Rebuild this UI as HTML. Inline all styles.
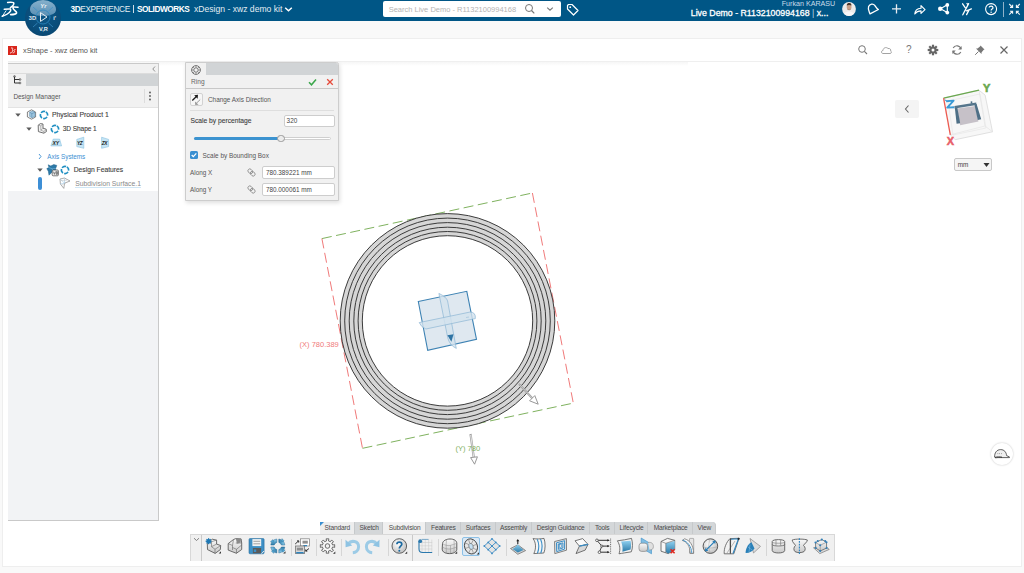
<!DOCTYPE html>
<html><head><meta charset="utf-8">
<style>
*{margin:0;padding:0;box-sizing:border-box}
html,body{width:1024px;height:573px;overflow:hidden;background:#f9f9f9;font-family:"Liberation Sans",sans-serif;position:relative}
.a{position:absolute}
.t{position:absolute;white-space:nowrap;line-height:1}
svg{position:absolute;overflow:visible}
</style></head><body>
<div class="a" style="left:0;top:0;width:1024px;height:21px;background:#005686"></div>
<div class="a" style="left:2px;top:38px;width:1020px;height:529px;background:#fff;border:1px solid #eeeeee"></div>
<svg style="left:0px;top:0px" width="22" height="20" viewBox="0 0 22 20">
 <g fill="none" stroke="#fff" stroke-linecap="round" stroke-linejoin="round">
  <path d="M7.6 2.5 C9.5 2.2 12 2.1 13.6 2.6 C14.2 3.6 13.4 5.6 10.4 7.6" stroke-width="1.5"/>
  <path d="M4.3 9.3 C6.5 9 8.8 8.9 10.6 9 C11.6 11 9 13.8 2.3 16.3" stroke-width="1.5"/>
  <path d="M2.3 16.3 L6 10.8" stroke-width="0.9"/>
  <path d="M12.8 7 C14.6 6.9 16.4 7 18 7.3" stroke-width="1.4"/>
  <path d="M13.2 7.3 C12.2 9.4 16.2 10.8 16.6 12.5 C17 14 13.5 14.6 10.6 14.6" stroke-width="1.6"/>
 </g>
</svg>
<div class="a" style="left:24.5px;top:0px;width:36px;height:36px;border-radius:50%;background:radial-gradient(circle at 50% 40%,#0d5888 0,#0a4d7a 60%,#073f66 100%)"></div>
<div class="a" style="left:29.5px;top:0px;width:26px;height:15.5px;border-radius:50% 50% 45% 45%/60% 60% 40% 40%;background:linear-gradient(#86b1cc,#5a8fb4)"></div>
<svg style="left:24.5px;top:0px" width="36" height="36" viewBox="0 0 36 36">
 <circle cx="18" cy="17" r="7" fill="none" stroke="#2c88c2" stroke-width="0.8"/>
 <g stroke="#3b90c8" stroke-width="0.7">
  <line x1="8" y1="7" x2="12.5" y2="11"/><line x1="28" y1="7" x2="23.5" y2="11"/>
  <line x1="8" y1="27" x2="12.5" y2="23"/><line x1="28" y1="27" x2="23.5" y2="23"/>
 </g>
 <path d="M15.5 12.6 L22 17 L15.5 21.4 Z" fill="none" stroke="#e8eef3" stroke-width="1"/>
 <text x="3.8" y="19.6" font-size="5.6" font-weight="bold" fill="#e8eef3" font-family="Liberation Sans">3D</text>
 <text x="15.3" y="7.6" font-size="5.8" font-weight="bold" font-style="italic" fill="#f0f4f7" font-family="Liberation Sans">Yr</text>
 <text x="28.3" y="19.6" font-size="5.6" font-weight="bold" fill="#e8eef3" font-family="Liberation Sans">i'</text>
 <text x="14" y="30.8" font-size="5.6" font-weight="bold" fill="#e8eef3" font-family="Liberation Sans">V,R</text>
</svg>
<div class="t" style="left:70.5px;top:4.9px;font-size:8.3px;color:#e3edf3;letter-spacing:-0.4px"><b style="color:#fff">3D</b>EXPERIENCE</div>
<div class="a" style="left:133px;top:5px;width:1px;height:8px;background:#cfdce6"></div>
<div class="t" style="left:137px;top:4.9px;font-size:8.3px;color:#fff;font-weight:bold;letter-spacing:-0.49px">SOLIDWORKS</div>
<div class="t" style="left:194px;top:4.6px;font-size:8.6px;color:#e3edf3">xDesign - xwz demo kit</div>
<svg style="left:284px;top:6px" width="9" height="7" viewBox="0 0 9 7"><path d="M1.2 1.8 L4.5 4.8 L7.8 1.8" fill="none" stroke="#fff" stroke-width="1.5"/></svg>
<div class="a" style="left:383px;top:1px;width:178px;height:16px;background:#fff;border-radius:2px"></div>
<div class="t" style="left:388.7px;top:6.12px;font-size:7.5px;color:#b4b4b4;">Search Live Demo - R1132100994168</div>
<svg style="left:524px;top:3px" width="12" height="12" viewBox="0 0 12 12"><circle cx="5" cy="5" r="3.5" fill="none" stroke="#777" stroke-width="1"/><line x1="7.5" y1="7.5" x2="10.3" y2="10.3" stroke="#777" stroke-width="1.2"/></svg>
<svg style="left:546px;top:6px" width="8" height="6" viewBox="0 0 8 6"><path d="M1.2 1.6 L4 4.2 L6.8 1.6" fill="none" stroke="#777" stroke-width="1.1"/></svg>
<svg style="left:566px;top:3px" width="13" height="13" viewBox="0 0 13 13"><path d="M1.5 2.5 L1.5 6 L7.5 12 L12 7.5 L6 1.5 L2.5 1.5 Z" fill="none" stroke="#fff" stroke-width="1.2" stroke-linejoin="round"/><circle cx="4.2" cy="4.2" r="0.9" fill="#fff"/></svg>
<div class="t" style="left:781.7px;top:1.00px;font-size:7.15px;color:#c9dceb;">Furkan KARASU</div>
<div class="t" style="left:690.8px;top:8.70px;font-size:8.78px;color:#fff;-webkit-text-stroke:0.3px #fff;">Live Demo - R1132100994168 <span style="color:#b9cfdf;-webkit-text-stroke:0">|</span> x...</div>
<svg style="left:842px;top:1.8px" width="14" height="14" viewBox="0 0 14 14"><defs><clipPath id="av"><circle cx="7" cy="7" r="6.9"/></clipPath></defs><g clip-path="url(#av)"><rect width="14" height="14" fill="#ecebea"/><path d="M1 14 C2 10.5 4.5 9.5 7 9.5 C9.5 9.5 12 10.5 13 14 Z" fill="#f7f7f7"/><ellipse cx="7.1" cy="5" rx="2.4" ry="3.1" fill="#c8a088"/><path d="M4.7 3.6 C4.8 1.6 6 1 7.1 1 C8.4 1 9.5 1.6 9.5 3.6 C8.5 2.8 5.8 2.8 4.7 3.6 Z" fill="#4a3528"/><path d="M5.3 6.8 C6 8.3 8.2 8.3 8.9 6.8 C8.6 8.6 5.6 8.6 5.3 6.8 Z" fill="#6a5040"/></g></svg>
<svg style="left:866px;top:2px" width="15" height="15" viewBox="0 0 15 15"><path d="M4 11.9 C3.2 9.5 1.6 7 2.6 4.6 C3.8 1.8 7.2 1.4 8.8 3.4 C10 5.2 10.6 6.6 12.4 7.5 Z" fill="none" stroke="#fff" stroke-width="1.3" stroke-linejoin="round"/></svg>
<svg style="left:889px;top:2px" width="15" height="15" viewBox="0 0 15 15"><path d="M7.5 2.3 V11.4 M3 6.8 H12" stroke="#e6ecf1" stroke-width="1.3"/></svg>
<svg style="left:912px;top:2px" width="15" height="15" viewBox="0 0 15 15"><path d="M2.8 12 C3 8.3 5.5 6.3 9 6.2 V3.6 L13 7.6 L9 11.4 V8.9 C6.2 8.9 4.3 10 2.8 12 Z" fill="none" stroke="#fff" stroke-width="1.15" stroke-linejoin="round"/></svg>
<svg style="left:936px;top:2px" width="15" height="15" viewBox="0 0 15 15"><path d="M4.5 6.8 L11.3 2.8 V10.6 Z" fill="none" stroke="#fff" stroke-width="1.2" stroke-linejoin="round"/><g fill="#fff"><circle cx="4.2" cy="6.8" r="2.2"/><circle cx="11.3" cy="2.9" r="1.9"/><circle cx="11.3" cy="10.6" r="1.9"/></g></svg>
<svg style="left:960px;top:2px" width="15" height="15" viewBox="0 0 15 15"><path d="M2.6 1.8 L5.2 5.6 M8.6 1.6 L2.8 12.8 M6.4 8.8 L11.4 6.8 M9.2 7.6 L6.6 12.6 M7 1.5 L8 3" fill="none" stroke="#fff" stroke-width="1.3" stroke-linecap="round"/></svg>
<svg style="left:983px;top:1px" width="16" height="16" viewBox="0 0 16 16"><circle cx="8.1" cy="8.1" r="5.5" fill="none" stroke="#fff" stroke-width="1.1"/><path d="M6.2 6.6 C6.2 4.7 10 4.7 10 6.7 C10 8.1 8.1 8.1 8.1 9.5" fill="none" stroke="#fff" stroke-width="1.2"/><circle cx="8.1" cy="11.2" r="0.75" fill="#fff"/></svg>
<div class="a" style="left:1003px;top:2px;width:1px;height:15px;background:#8fb2c9"></div>
<svg style="left:1008px;top:3px" width="14" height="14" viewBox="0 0 14 14"><g stroke="#f0f4f7" stroke-width="1.1" fill="none"><path d="M1.2 1 L4.6 4.4 M4.6 1.8 V4.4 H2"/><path d="M11.8 1 L8.4 4.4 M8.4 1.8 V4.4 H11"/><path d="M1.2 11.6 L4.6 8.2 M4.6 10.8 V8.2 H2"/><path d="M11.8 11.6 L8.4 8.2 M8.4 10.8 V8.2 H11"/></g></svg>
<div class="a" style="left:8px;top:46px;width:9px;height:9px;background:#d9261c"></div>
<svg style="left:8px;top:46px" width="9" height="9" viewBox="0 0 9 9"><path d="M3 2 C5 1.5 5.5 3 4 3.8 C5.5 4 5 6 2 7.2 M7.5 3.5 C6 3.4 5.6 4.5 6.4 5.2 C7 6 6 7 4.6 6.8" fill="none" stroke="#fff" stroke-width="0.8"/></svg>
<div class="t" style="left:23px;top:47.47px;font-size:7.4px;color:#555;">xShape - xwz demo kit</div>
<div class="a" style="left:8px;top:61px;width:1013px;height:1px;background:#efefef"></div>
<div class="a" style="left:8px;top:62px;width:680px;height:4px;background:linear-gradient(#f6f6f6,rgba(255,255,255,0))"></div>
<svg style="left:857px;top:44px" width="12" height="12" viewBox="0 0 12 12"><circle cx="5" cy="5" r="3.3" fill="none" stroke="#777" stroke-width="1"/><line x1="7.4" y1="7.4" x2="10" y2="10" stroke="#777" stroke-width="1.1"/></svg>
<svg style="left:880px;top:45px" width="13" height="10" viewBox="0 0 13 10"><path d="M3 8.5 C1 8.5 1 5.5 3 5.5 C3 3 6 1.5 8 3.5 C10 3 11.5 5 10.5 6 C12 6.5 11.5 8.5 10 8.5 Z" fill="none" stroke="#999" stroke-width="0.9"/></svg>
<div class="t" style="left:906px;top:44.5px;font-size:10px;color:#777">?</div>
<svg style="left:927px;top:44px" width="12" height="12" viewBox="0 0 12 12"><g transform="translate(6 6)"><circle r="3.6" fill="#666"/><g fill="#666"><rect x="-1.1" y="-5.3" width="2.2" height="10.6"/><rect x="-1.1" y="-5.3" width="2.2" height="10.6" transform="rotate(45)"/><rect x="-1.1" y="-5.3" width="2.2" height="10.6" transform="rotate(90)"/><rect x="-1.1" y="-5.3" width="2.2" height="10.6" transform="rotate(135)"/></g><circle r="1.5" fill="#fff"/></g></svg>
<svg style="left:951px;top:44px" width="12" height="12" viewBox="0 0 12 12"><path d="M10 5 A4.2 4.2 0 0 0 2.2 4 M2 7 A4.2 4.2 0 0 0 9.8 8" fill="none" stroke="#777" stroke-width="1.2"/><path d="M10.6 2 V5.4 H7.2 Z M1.4 10 V6.6 H4.8 Z" fill="#777"/></svg>
<svg style="left:974px;top:44px" width="12" height="12" viewBox="0 0 12 12"><path d="M6.5 1.5 L10.5 5.5 L9.5 6 L7.5 8.5 L7.5 10 L2 4.5 L3.5 4.5 L6 2.5 Z" fill="#777"/><line x1="4.5" y1="7.5" x2="1.2" y2="10.8" stroke="#777" stroke-width="1"/></svg>
<svg style="left:999px;top:45px" width="10" height="10" viewBox="0 0 10 10"><path d="M1.5 1.5 L8.5 8.5 M8.5 1.5 L1.5 8.5" stroke="#666" stroke-width="1.2"/></svg>
<div class="a" style="left:8px;top:63px;width:151px;height:458px;background:#f2f3f5;border:1px solid #c9c9c9;border-left:none"></div>
<div class="a" style="left:8px;top:64px;width:150px;height:10px;background:#f1f1f1;border-bottom:1px solid #dcdcdc"></div>
<svg style="left:151px;top:65px" width="6" height="8" viewBox="0 0 6 8"><path d="M4 1.5 L1.8 4 L4 6.5" fill="none" stroke="#888" stroke-width="0.9"/></svg>
<div class="a" style="left:8px;top:74px;width:150px;height:12px;background:#d1d4d6"></div>
<div class="a" style="left:8px;top:74px;width:18px;height:12px;background:#f1f1f1"></div>
<svg style="left:12px;top:75px" width="10" height="10" viewBox="0 0 10 10"><path d="M2.5 1.5 V8 H7.5 M2.5 4.5 H7.5" fill="none" stroke="#333" stroke-width="1"/><circle cx="2.5" cy="1.5" r="0.9" fill="none" stroke="#333" stroke-width="0.6"/><circle cx="8" cy="4.5" r="0.9" fill="none" stroke="#333" stroke-width="0.6"/><circle cx="8" cy="8" r="0.9" fill="none" stroke="#333" stroke-width="0.6"/></svg>
<div class="a" style="left:8px;top:86px;width:150px;height:22px;background:#f1f1f1;border-bottom:1px solid #e3e3e3"></div>
<div class="t" style="left:13.4px;top:93.64px;font-size:6.45px;color:#555;">Design Manager</div>
<div class="a" style="left:144px;top:89px;width:1px;height:14px;background:#dcdcdc"></div>
<svg style="left:148px;top:90px" width="4" height="12" viewBox="0 0 4 12"><g fill="#555"><circle cx="2" cy="2.5" r="0.9"/><circle cx="2" cy="6" r="0.9"/><circle cx="2" cy="9.5" r="0.9"/></g></svg>
<div class="a" style="left:8px;top:108px;width:150px;height:83px;background:#fff"></div>
<svg style="left:15.2px;top:112.6px" width="6" height="4" viewBox="0 0 6 4"><path d="M0.3 0.6 L5.7 0.6 L3 3.7 Z" fill="#5a5a5a"/></svg>
<svg style="left:26px;top:109px" width="11" height="11" viewBox="0 0 11 11"><path d="M5.5 0.8 L9.6 3 V8 L5.5 10.2 L1.4 8 V3 Z" fill="#f4f4f4" stroke="#666" stroke-width="0.8"/><path d="M3.6 3.2 L6.8 2 L9 3.4 V7.4 L5.8 8.8 L3.6 7.4 Z" fill="#9fc6df" stroke="#5a8fb3" stroke-width="0.5"/><path d="M3.6 3.2 L5.8 4.6 L9 3.4 M5.8 4.6 V8.8" fill="none" stroke="#4a7fa3" stroke-width="0.5"/></svg>
<svg style="left:39px;top:109.6px" width="10" height="10" viewBox="0 0 10 10"><circle cx="5" cy="5" r="3.6" fill="none" stroke="#1f8fc2" stroke-width="1.6" stroke-dasharray="4.3 1.35" transform="rotate(-60 5 5)"/></svg>
<div class="t" style="left:51.9px;top:112.03px;font-size:6.88px;color:#3c3c3c;-webkit-text-stroke:0.1px #3c3c3c;">Physical Product 1</div>
<svg style="left:26px;top:126.5px" width="6" height="4" viewBox="0 0 6 4"><path d="M0.3 0.6 L5.7 0.6 L3 3.7 Z" fill="#5a5a5a"/></svg>
<svg style="left:37px;top:123px" width="11" height="11" viewBox="0 0 11 11"><path d="M1.2 2.2 L3.4 0.6 L6 1 V5.2 L9.2 6.2 L9.4 8.6 L6.8 10.2 L1.4 8.6 Z" fill="#f2f2f2" stroke="#5a5a5a" stroke-width="0.85" stroke-linejoin="round"/><path d="M1.2 2.2 L3.8 2.8 L6 1 M3.8 2.8 V7.2 L6.8 8.4 L9.4 6.6 M6.8 8.4 V10.2 M3.8 7.2 L6 5.2" fill="none" stroke="#8a8a8a" stroke-width="0.6"/></svg>
<svg style="left:49.7px;top:123.5px" width="10" height="10" viewBox="0 0 10 10"><circle cx="5" cy="5" r="3.6" fill="none" stroke="#1f8fc2" stroke-width="1.6" stroke-dasharray="4.3 1.35" transform="rotate(-60 5 5)"/></svg>
<div class="t" style="left:62.8px;top:126.07px;font-size:6.6px;color:#3c3c3c;-webkit-text-stroke:0.1px #3c3c3c;letter-spacing:-0.1px;">3D Shape 1</div>
<svg style="left:50px;top:138px" width="13" height="9" viewBox="0 0 13 9"><path d="M3.2 1.1 H9.6 L11.6 7.9 H0.9 Z" fill="#c6e5f5" stroke="#86bfdf" stroke-width="0.6"/><text x="2.6" y="6.6" font-size="5" font-weight="bold" font-style="italic" fill="#1a1a1a" font-family="Liberation Sans" letter-spacing="-0.2">XY</text></svg>
<svg style="left:76px;top:137px" width="9" height="12" viewBox="0 0 9 12"><path d="M0.8 2.4 L7.8 0.2 V11.3 L0.8 9.6 Z" fill="#c6e5f5" stroke="#86bfdf" stroke-width="0.6"/><text x="0.9" y="7.8" font-size="4.8" font-weight="bold" font-style="italic" fill="#1a1a1a" font-family="Liberation Sans" letter-spacing="-0.3">YZ</text></svg>
<svg style="left:100.5px;top:137px" width="9" height="12" viewBox="0 0 9 12"><path d="M0.6 0.2 L7.6 2.4 V9.6 L0.6 11.3 Z" fill="#c6e5f5" stroke="#86bfdf" stroke-width="0.6"/><text x="0.7" y="7.8" font-size="4.8" font-weight="bold" font-style="italic" fill="#1a1a1a" font-family="Liberation Sans" letter-spacing="-0.3">ZX</text></svg>
<svg style="left:38px;top:153px" width="4" height="7" viewBox="0 0 4 7"><path d="M1 1 L3 3.5 L1 6" fill="none" stroke="#3b8fd3" stroke-width="0.9"/></svg>
<div class="t" style="left:47.3px;top:154.10px;font-size:6.33px;color:#3b8fd3;">Axis Systems</div>
<svg style="left:36.8px;top:167.7px" width="6" height="4" viewBox="0 0 6 4"><path d="M0.3 0.6 L5.7 0.6 L3 3.7 Z" fill="#5a5a5a"/></svg>
<svg style="left:46px;top:163px" width="14" height="14" viewBox="0 0 14 14"><path d="M2.2 1.8 L4.8 3 L7.8 1.6 L10.8 2.4 L9.6 5.6 L10.2 9.4 L6.4 8.8 L3 12.2 L2.4 8.4 L0.8 5.6 L3 4.6 Z" fill="#2d7aa8" stroke="#1d5f88" stroke-width="0.5"/><path d="M3 4.6 L6.4 5.8 L9.6 5.6 M6.4 5.8 L6.4 8.8" fill="none" stroke="#7fc0e6" stroke-width="0.6"/><rect x="6.2" y="7" width="6.2" height="5.8" rx="1" fill="#f2f2f2" stroke="#444" stroke-width="0.7"/><path d="M7.4 8.6 L8.4 11.4 L9.4 8.6 M10.2 8.6 H11.4 V11.4 H10.2 Z M10.2 10 H11.4" fill="none" stroke="#333" stroke-width="0.55"/></svg>
<svg style="left:60.2px;top:164.7px" width="10" height="10" viewBox="0 0 10 10"><circle cx="5" cy="5" r="3.6" fill="none" stroke="#1f8fc2" stroke-width="1.6" stroke-dasharray="4.3 1.35" transform="rotate(-60 5 5)"/></svg>
<div class="t" style="left:73.7px;top:167.19px;font-size:6.76px;color:#3c3c3c;-webkit-text-stroke:0.1px #3c3c3c;">Design Features</div>
<div class="a" style="left:38px;top:177px;width:4px;height:12.5px;background:#3d8fd6;border-radius:2px"></div>
<svg style="left:59px;top:177px" width="12" height="12" viewBox="0 0 12 12"><path d="M1 2 L5.5 1 L11 4 L5.6 6.2 L4.8 11.4 L1.4 7 Z" fill="none" stroke="#8a8a8a" stroke-width="0.7" stroke-linejoin="round"/><path d="M1 2 L5.6 6.2 M5.5 1 L5.6 6.2 M1.4 7 L5.6 6.2" fill="none" stroke="#9fc9e6" stroke-width="0.6"/><path d="M2.2 3.5 L8 3.2 M3 8 L8.5 4.8" fill="none" stroke="#b5b5b5" stroke-width="0.45"/></svg>
<div class="t" style="left:75.2px;top:181.07px;font-size:6.8px;color:#8a8a8a;"><span style="border-bottom:1px solid #cfe6f5">Subdivision Surface.1</span></div>
<div class="a" style="left:185px;top:62px;width:154px;height:139px;background:#f1f1f1;border:1px solid #cdcdcd;border-radius:0 2.5px 0 0;box-shadow:1px 2px 4px rgba(0,0,0,.13)"></div>
<div class="a" style="left:205.5px;top:63px;width:132.5px;height:11.5px;background:#d1d4d6;border-radius:0 2px 0 0"></div>
<svg style="left:190px;top:64px" width="12" height="12" viewBox="0 0 12 12"><circle cx="6" cy="6" r="4.4" fill="none" stroke="#666" stroke-width="0.9"/><circle cx="6" cy="6" r="2.2" fill="none" stroke="#666" stroke-width="0.8"/><path d="M6 1.6 V3.8 M6 8.2 V10.4 M1.6 6 H3.8 M8.2 6 H10.4 M2.9 2.9 L4.4 4.4 M7.6 7.6 L9.1 9.1 M9.1 2.9 L7.6 4.4 M4.4 7.6 L2.9 9.1" stroke="#666" stroke-width="0.6"/></svg>
<div class="t" style="left:191px;top:78.77px;font-size:6.6px;color:#666;">Ring</div>
<svg style="left:308px;top:77.5px" width="9" height="8" viewBox="0 0 9 8"><path d="M1 4.3 L3.5 6.8 L8 1.5" fill="none" stroke="#3aa64a" stroke-width="1.5"/></svg>
<svg style="left:325.5px;top:77.5px" width="8" height="8" viewBox="0 0 8 8"><path d="M1.2 1.2 L6.8 6.8 M6.8 1.2 L1.2 6.8" stroke="#e64a3a" stroke-width="1.3"/></svg>
<div class="a" style="left:186px;top:87.5px;width:152px;height:1px;background:#c8c8c8"></div>
<div class="a" style="left:190.2px;top:93.3px;width:12.6px;height:13.1px;background:#f6f6f6;border:1px solid #d2d2d2;border-radius:2px"></div>
<svg style="left:190px;top:93px" width="13" height="14" viewBox="0 0 13 14"><path d="M2.3 7.4 L6.4 3.6" stroke="#1a1a1a" stroke-width="1.3"/><path d="M4.2 2.2 L8 1.8 L7.6 5.8 Z" fill="#1a1a1a"/><path d="M10.2 6.6 L6.2 10.4" stroke="#9a9a9a" stroke-width="1"/><path d="M5 8.6 L5.2 12 L8.6 11.8 Z" fill="#9a9a9a"/></svg>
<div class="t" style="left:208px;top:97.46px;font-size:6.4px;color:#555;">Change Axis Direction</div>
<div class="a" style="left:190px;top:110px;width:144px;height:1px;background:#dedede"></div>
<div class="t" style="left:190.5px;top:117.77px;font-size:6.69px;color:#3c3c3c;-webkit-text-stroke:0.1px #3c3c3c;">Scale by percentage</div>
<div class="a" style="left:283.5px;top:114.5px;width:51px;height:12.5px;background:#fff;border:1px solid #cdcdcd;border-radius:2px"></div>
<div class="t" style="left:286.6px;top:118.26px;font-size:6.4px;color:#444;">320</div>
<div class="a" style="left:194px;top:137.3px;width:137px;height:2.6px;background:#fff;border:0.6px solid #cfcfcf;border-radius:2px"></div>
<div class="a" style="left:194px;top:137.3px;width:87px;height:2.6px;background:#3c93d0;border-radius:2px"></div>
<div class="a" style="left:277px;top:134.7px;width:7.8px;height:7.8px;background:#ececec;border:1px solid #9a9a9a;border-radius:50%"></div>
<div class="a" style="left:190px;top:151.3px;width:7.5px;height:7.7px;background:#3a8fd1;border-radius:1.5px"></div>
<svg style="left:190px;top:151.3px" width="8" height="8" viewBox="0 0 8 8"><path d="M1.7 4 L3.3 5.6 L6.3 2.4" fill="none" stroke="#fff" stroke-width="1.2"/></svg>
<div class="t" style="left:202.6px;top:153.05px;font-size:6.42px;color:#555;">Scale by Bounding Box</div>
<div class="t" style="left:190px;top:169.89px;font-size:6.34px;color:#555;">Along X</div>
<div class="t" style="left:190px;top:186.89px;font-size:6.34px;color:#555;">Along Y</div>
<svg style="left:247px;top:167.7px" width="9" height="9" viewBox="0 0 9 9"><g fill="none" stroke="#8a8a8a" stroke-width="0.85" transform="rotate(45 4.5 4.5)"><rect x="0.2" y="2.6" width="5.2" height="3.8" rx="1.9"/><rect x="3.6" y="2.6" width="5.2" height="3.8" rx="1.9"/></g></svg>
<svg style="left:247px;top:184.7px" width="9" height="9" viewBox="0 0 9 9"><g fill="none" stroke="#8a8a8a" stroke-width="0.85" transform="rotate(45 4.5 4.5)"><rect x="0.2" y="2.6" width="5.2" height="3.8" rx="1.9"/><rect x="3.6" y="2.6" width="5.2" height="3.8" rx="1.9"/></g></svg>
<div class="a" style="left:262px;top:166px;width:72.5px;height:12.5px;background:#fff;border:1px solid #cdcdcd;border-radius:2px"></div>
<div class="a" style="left:262px;top:183.2px;width:72.5px;height:12.4px;background:#fff;border:1px solid #cdcdcd;border-radius:2px"></div>
<div class="t" style="left:265.9px;top:170.08px;font-size:6.36px;color:#444;">780.389221 mm</div>
<div class="t" style="left:265.9px;top:187.28px;font-size:6.36px;color:#444;">780.000061 mm</div>
<svg style="left:0;top:0" width="1024" height="573" viewBox="0 0 1024 573"><line x1="321.9" y1="238.6" x2="532.4" y2="193.0" stroke="#7fb25f" stroke-width="1" stroke-dasharray="10 4.5"/><line x1="362.5" y1="448.3" x2="573.3" y2="403.1" stroke="#7fb25f" stroke-width="1" stroke-dasharray="10 4.5"/><line x1="321.9" y1="238.6" x2="362.5" y2="448.3" stroke="#f07a7a" stroke-width="1" stroke-dasharray="10 4.5"/><line x1="532.4" y1="193.0" x2="573.3" y2="403.1" stroke="#f07a7a" stroke-width="1" stroke-dasharray="10 4.5"/><circle cx="447.5" cy="320.9" r="96.25" fill="none" stroke="#d6d6d6" stroke-width="22.3"/><circle cx="447.5" cy="320.9" r="107.3" fill="none" stroke="#333" stroke-width="0.95"/><circle cx="447.5" cy="320.9" r="102.8" fill="none" stroke="#333" stroke-width="0.95"/><circle cx="447.5" cy="320.9" r="98.3" fill="none" stroke="#333" stroke-width="0.95"/><circle cx="447.5" cy="320.9" r="93.7" fill="none" stroke="#333" stroke-width="0.95"/><circle cx="447.5" cy="320.9" r="89.4" fill="none" stroke="#333" stroke-width="0.95"/><circle cx="447.5" cy="320.9" r="85.2" fill="none" stroke="#333" stroke-width="0.95"/><path d="M519 384 L533 399" stroke="#9a9a9a" stroke-width="1.9"/><path d="M519.5 384.5 L533 399" stroke="#eeeeee" stroke-width="0.6"/><path d="M529.6 400.8 L538.2 404.2 L534.8 395.6 Z" fill="#fff" stroke="#8c8c8c" stroke-width="0.9"/><path d="M470.5 434 L473.8 457.5" stroke="#a0a0a0" stroke-width="2.2"/><path d="M470.7 435 L473.8 457.5" stroke="#ececec" stroke-width="0.9"/><path d="M470.6 457.6 L474.6 464.2 L477.4 456.8 Z" fill="#fff" stroke="#8c8c8c" stroke-width="0.9"/><path d="M418.3 301.5 L466.8 291.3 L476.5 339.3 L427.7 350.3 Z" fill="#dfe8f0" stroke="#3d82b3" stroke-width="1.1"/><path d="M438.9 293.4 Q446.5 297 447.6 301 L455.8 346 L456.3 348.4 Q449.5 345 447.7 337.7 Z" fill="#d3e2ee" fill-opacity="0.8" stroke="#8db6d4" stroke-width="0.7"/><path d="M419.2 322.6 L469.8 312.1 Q476 312 475.3 318.6 L425.9 329 Q421 327 419.2 322.6 Z" fill="#d3e2ee" fill-opacity="0.8" stroke="#8db6d4" stroke-width="0.7"/><path d="M447.4 335.3 L453.5 334.3 L451.4 341.7 Z" fill="#2f74a4"/><path d="M466 317.5 L469 317" stroke="#9bbdd8" stroke-width="0.6"/></svg>
<div class="t" style="left:299.6px;top:341.23px;font-size:7.5px;color:#f07a7a;">(X) 780.389</div>
<div class="t" style="left:455.4px;top:445.08px;font-size:7.6px;color:#7fb25f;">(Y) 780</div>
<div class="a" style="left:895px;top:99.7px;width:24.3px;height:18.3px;background:#f4f4f4;border-radius:2px"></div>
<svg style="left:903px;top:104px" width="8" height="10" viewBox="0 0 8 10"><path d="M5.5 1.5 L2.5 5 L5.5 8.5" fill="none" stroke="#666" stroke-width="1.1"/></svg>
<svg style="left:940px;top:80px" width="60" height="70" viewBox="0 0 60 70">
  <path d="M3.6 18.2 L39 10.2 L45.1 15.1 L52.5 51.8 L15.2 59.7 L10.3 54.8" fill="#f7f7f7" stroke="#d9d9d9" stroke-width="0.8"/>
  <path d="M39 10.2 L45 46 L10.3 54.8 M45 46 L52.5 51.8" fill="none" stroke="#e2e2e2" stroke-width="0.6"/>
  <path d="M8 21 L40 14 L46 48 L13 55 Z" fill="none" stroke="#e4e4e4" stroke-width="0.6"/>
  <path d="M17 28.6 L35.5 26 L38.4 41.6 L20.2 45.2 Z" fill="#c6c1c8"/>
  <path d="M14.8 27.4 L17.2 27 L20.2 43.2 L16.6 43.8 Z" fill="#4e6f86"/>
  <path d="M34.4 24.5 L36.6 24.1 L41.2 39.2 L37.8 39.9 Z" fill="#4e6f86"/>
  <path d="M14.4 26 L36.2 22.4 L36.5 24.9 L14.7 28.5 Z" fill="#56768c"/>
  <path d="M30.6 21.5 L32.2 21.3 L32.4 23.5 L30.8 23.7 Z" fill="#4e6f86"/>
  <line x1="3.6" y1="18.2" x2="39" y2="10.2" stroke="#6aa84f" stroke-width="1.3"/>
  <line x1="3.6" y1="18.2" x2="10.3" y2="54.8" stroke="#ec5a50" stroke-width="1.3"/>
 <text x="43" y="12.3" font-size="11" font-weight="bold" fill="#6aa84f" stroke="#6aa84f" stroke-width="0.6" font-family="Liberation Sans">Y</text>
 <path d="M6.2 21.2 L13.6 20.6 L7.2 27.6 L14.2 27.2" fill="none" stroke="#3a9ad6" stroke-width="1.9" stroke-linejoin="round"/><path d="M4.8 19.8 L7.2 21.4" stroke="#3a9ad6" stroke-width="1"/>
 <text x="6.8" y="65.3" font-size="11" font-weight="bold" fill="#e8606a" stroke="#e8606a" stroke-width="0.5" font-family="Liberation Sans">X</text>
</svg>
<div class="a" style="left:954.3px;top:158.3px;width:38px;height:12.5px;background:#f5f5f5;border:1px solid #c8c8c8;border-radius:2px"></div>
<div class="t" style="left:957.7px;top:162.16px;font-size:6.4px;color:#444;">mm</div>
<svg style="left:983px;top:161.5px" width="7" height="6" viewBox="0 0 7 6"><path d="M0.5 1 H6.5 L3.5 5 Z" fill="#333"/></svg>
<div class="a" style="left:991px;top:443px;width:22px;height:22px;border-radius:50%;background:#fff;box-shadow:0 0 2px rgba(0,0,0,.25)"></div>
<svg style="left:993.5px;top:447px" width="17" height="14" viewBox="0 0 17 14"><path d="M0.6 10.2 C0.4 6 2.6 2.6 6.6 2.6 C10.2 2.6 12.2 5 12.6 8.6 L15.6 10 L15.4 10.6 L4 10.6 C2.5 10.6 1.4 11.2 0.6 10.2 Z" fill="#efefef" stroke="#444" stroke-width="0.85" stroke-linejoin="round"/><path d="M3.6 6.6 H4.2 M5.4 6.6 H6 M7.2 6.6 H7.8" stroke="#555" stroke-width="0.8"/><path d="M1 10.4 C3 9.8 6 9.8 8 10.2" fill="none" stroke="#222" stroke-width="0.9"/></svg>
<div class="a" style="left:319.5px;top:522.3px;width:396.5px;height:12px;background:#d4d7d9;border-radius:2px 4px 0 0"></div>
<div class="a" style="left:319.5px;top:522.3px;width:35.5px;height:12px;background:#ededed;border-radius:2px 0 0 0;border-right:1px solid #c6c9cb"></div>
<div class="t" style="left:319.5px;top:525.37px;width:35.5px;text-align:center;font-size:6.6px;letter-spacing:-0.18px;color:#4a4a4a">Standard</div>
<div class="a" style="left:355px;top:522.3px;width:28.30000000000001px;height:12px;background:#d4d7d9;border-radius:0;border-right:1px solid #c6c9cb"></div>
<div class="t" style="left:355px;top:525.37px;width:28.30000000000001px;text-align:center;font-size:6.6px;letter-spacing:-0.18px;color:#4a4a4a">Sketch</div>
<div class="a" style="left:383.3px;top:522.3px;width:42.69999999999999px;height:12px;background:#f0f0f0;border-radius:0;border-right:1px solid #c6c9cb"></div>
<div class="t" style="left:383.3px;top:525.37px;width:42.69999999999999px;text-align:center;font-size:6.6px;letter-spacing:-0.18px;color:#4a4a4a">Subdivision</div>
<div class="a" style="left:426px;top:522.3px;width:34.69999999999999px;height:12px;background:#d4d7d9;border-radius:0;border-right:1px solid #c6c9cb"></div>
<div class="t" style="left:426px;top:525.37px;width:34.69999999999999px;text-align:center;font-size:6.6px;letter-spacing:-0.18px;color:#4a4a4a">Features</div>
<div class="a" style="left:460.7px;top:522.3px;width:34.900000000000034px;height:12px;background:#d4d7d9;border-radius:0;border-right:1px solid #c6c9cb"></div>
<div class="t" style="left:460.7px;top:525.37px;width:34.900000000000034px;text-align:center;font-size:6.6px;letter-spacing:-0.18px;color:#4a4a4a">Surfaces</div>
<div class="a" style="left:495.6px;top:522.3px;width:36.0px;height:12px;background:#d4d7d9;border-radius:0;border-right:1px solid #c6c9cb"></div>
<div class="t" style="left:495.6px;top:525.37px;width:36.0px;text-align:center;font-size:6.6px;letter-spacing:-0.18px;color:#4a4a4a">Assembly</div>
<div class="a" style="left:531.6px;top:522.3px;width:58.10000000000002px;height:12px;background:#d4d7d9;border-radius:0;border-right:1px solid #c6c9cb"></div>
<div class="t" style="left:531.6px;top:525.37px;width:58.10000000000002px;text-align:center;font-size:6.6px;letter-spacing:-0.18px;color:#4a4a4a">Design Guidance</div>
<div class="a" style="left:589.7px;top:522.3px;width:24.899999999999977px;height:12px;background:#d4d7d9;border-radius:0;border-right:1px solid #c6c9cb"></div>
<div class="t" style="left:589.7px;top:525.37px;width:24.899999999999977px;text-align:center;font-size:6.6px;letter-spacing:-0.18px;color:#4a4a4a">Tools</div>
<div class="a" style="left:614.6px;top:522.3px;width:33.89999999999998px;height:12px;background:#d4d7d9;border-radius:0;border-right:1px solid #c6c9cb"></div>
<div class="t" style="left:614.6px;top:525.37px;width:33.89999999999998px;text-align:center;font-size:6.6px;letter-spacing:-0.18px;color:#4a4a4a">Lifecycle</div>
<div class="a" style="left:648.5px;top:522.3px;width:44.200000000000045px;height:12px;background:#d4d7d9;border-radius:0;border-right:1px solid #c6c9cb"></div>
<div class="t" style="left:648.5px;top:525.37px;width:44.200000000000045px;text-align:center;font-size:6.6px;letter-spacing:-0.18px;color:#4a4a4a">Marketplace</div>
<div class="a" style="left:692.7px;top:522.3px;width:23.299999999999955px;height:12px;background:#d4d7d9;border-radius:0 4px 0 0;border-right:1px solid #c6c9cb"></div>
<div class="t" style="left:692.7px;top:525.37px;width:23.299999999999955px;text-align:center;font-size:6.6px;letter-spacing:-0.18px;color:#4a4a4a">View</div>
<svg style="left:319.5px;top:522.3px" width="4" height="4" viewBox="0 0 4 4"><path d="M0 0 H4 L0 4 Z" fill="#3a8fd1"/></svg>
<div class="a" style="left:190.3px;top:534px;width:645px;height:27px;background:#f0f0f0;border:1px solid #d8d8d8;border-bottom:none"></div>
<svg style="left:193px;top:537px" width="7" height="5" viewBox="0 0 7 5"><path d="M1 1.2 L3.5 3.5 L6 1.2" fill="none" stroke="#666" stroke-width="0.8"/></svg>
<div class="a" style="left:200.8px;top:535px;width:1px;height:26px;background:#c9c9c9"></div>
<div class="a" style="left:412.4px;top:535px;width:1px;height:26px;background:#c9c9c9"></div>
<div class="a" style="left:290.5px;top:539px;width:1px;height:17px;background:#d6d6d6"></div>
<div class="a" style="left:315.9px;top:539px;width:1px;height:17px;background:#d6d6d6"></div>
<div class="a" style="left:340.5px;top:539px;width:1px;height:17px;background:#d6d6d6"></div>
<div class="a" style="left:387.6px;top:539px;width:1px;height:17px;background:#d6d6d6"></div>
<div class="a" style="left:437.6px;top:539px;width:1px;height:17px;background:#d6d6d6"></div>
<div class="a" style="left:505.6px;top:539px;width:1px;height:17px;background:#d6d6d6"></div>
<div class="a" style="left:766.4px;top:539px;width:1px;height:17px;background:#d6d6d6"></div>
<div class="a" style="left:462px;top:537.3px;width:18px;height:18.5px;background:#dbe9f5;border:1px solid #8cc0e6;border-radius:2px"></div>
<svg style="left:0;top:0" width="1024" height="573" viewBox="0 0 1024 573"><defs><linearGradient id="gb" x1="0" y1="0" x2="0" y2="1"><stop offset="0" stop-color="#8fd0f0"/><stop offset="1" stop-color="#2b7aa8"/></linearGradient><linearGradient id="gg" x1="0" y1="0" x2="0" y2="1"><stop offset="0" stop-color="#fafafa"/><stop offset="1" stop-color="#c8c8c8"/></linearGradient><radialGradient id="gs" cx="0.4" cy="0.35" r="0.7"><stop offset="0" stop-color="#fff"/><stop offset="1" stop-color="#bdbdbd"/></radialGradient></defs><path d="M207.3 543.8 L212.2 539.2 L216.6 540.1 L216.6 544.1 L220.7 545.5 L220.3 549.6 L215.2 553.4 L207.5 549.6 Z" fill="url(#gg)" stroke="#555" stroke-width="0.85" stroke-linejoin="round"/><path d="M207.3 543.8 L211.5 541.7 L216.6 540.1 M211.5 541.7 V546.7 L216.6 544.1 M211.5 546.7 L215 549.3 L220.7 545.5 M215 549.3 V553.4" fill="none" stroke="#666" stroke-width="0.6"/><g transform="translate(208.6 541.2)"><circle r="2.2" fill="#1f78b4"/><g fill="#1f78b4"><rect x="-0.6" y="-3" width="1.2" height="6"/><rect x="-0.6" y="-3" width="1.2" height="6" transform="rotate(45)"/><rect x="-0.6" y="-3" width="1.2" height="6" transform="rotate(90)"/><rect x="-0.6" y="-3" width="1.2" height="6" transform="rotate(135)"/></g></g><path d="M218.7 553.6 L221 553.6 L221 551.3000000000001 Z" fill="#333"/><path d="M228.2 543.6 L233.5 539.5 L235.8 538.6 L241.1 538.9 L241.7 543 L241.7 549.5 L236.4 553.3 L228.2 550.1 Z" fill="url(#gg)" stroke="#555" stroke-width="0.85" stroke-linejoin="round"/><path d="M228.2 543.6 L232.5 545.5 L233.5 539.5 M232.5 545.5 V550 M232.5 547.5 L236.5 549.3 L241.7 545 M236.5 549.3 V553.3 M235.8 543 L241.7 543" fill="none" stroke="#666" stroke-width="0.6"/><path d="M235.8 538.6 L241.1 538.9 L240.6 542.5 L237 543.7 Z" fill="#8a8a8a"/><rect x="249" y="538.6" width="15.1" height="15.2" rx="1" fill="#3d8fc5" stroke="#2d6f9c" stroke-width="0.6"/><rect x="252.4" y="539.1" width="8.8" height="7" fill="#f2f2f2"/><path d="M253.4 541.3 H260.2 M253.4 543.8 H260.2" stroke="#9a9a9a" stroke-width="0.9"/><rect x="252.9" y="548" width="8.2" height="5.3" fill="#5a5a5a"/><rect x="253.8" y="549.4" width="2.4" height="2.6" fill="#3d8fc5"/><path d="M261.5 553.6 L264.1 551" stroke="#e8e8e8" stroke-width="1"/><g transform="rotate(0 277.8 546.0)"><path d="M270.8 545.0 A7 7 0 0 1 276.8 539.0 L276.8 542.4 A3.6 3.6 0 0 0 274.2 545.0 Z" fill="url(#gb)" stroke="#2a6a94" stroke-width="0.5"/><path d="M270.40000000000003 541.8 L272.8 539.6 L273.6 542.2 Z" fill="#5aaedb" stroke="#2a6a94" stroke-width="0.35"/></g><g transform="rotate(90 277.8 546.0)"><path d="M270.8 545.0 A7 7 0 0 1 276.8 539.0 L276.8 542.4 A3.6 3.6 0 0 0 274.2 545.0 Z" fill="url(#gb)" stroke="#2a6a94" stroke-width="0.5"/><path d="M270.40000000000003 541.8 L272.8 539.6 L273.6 542.2 Z" fill="#5aaedb" stroke="#2a6a94" stroke-width="0.35"/></g><g transform="rotate(180 277.8 546.0)"><path d="M270.8 545.0 A7 7 0 0 1 276.8 539.0 L276.8 542.4 A3.6 3.6 0 0 0 274.2 545.0 Z" fill="url(#gb)" stroke="#2a6a94" stroke-width="0.5"/><path d="M270.40000000000003 541.8 L272.8 539.6 L273.6 542.2 Z" fill="#5aaedb" stroke="#2a6a94" stroke-width="0.35"/></g><g transform="rotate(270 277.8 546.0)"><path d="M270.8 545.0 A7 7 0 0 1 276.8 539.0 L276.8 542.4 A3.6 3.6 0 0 0 274.2 545.0 Z" fill="url(#gb)" stroke="#2a6a94" stroke-width="0.5"/><path d="M270.40000000000003 541.8 L272.8 539.6 L273.6 542.2 Z" fill="#5aaedb" stroke="#2a6a94" stroke-width="0.35"/></g><path d="M283.2 553.6 L285.5 553.6 L285.5 551.3000000000001 Z" fill="#333"/><rect x="300.5" y="538.8" width="9" height="7.2" fill="#fff" stroke="#8a8a8a" stroke-width="0.8"/><rect x="302.5" y="540.7" width="5.3" height="2.9" fill="#8f8f8f"/><rect x="303.3" y="545" width="3.7" height="1.2" fill="#2f86c0"/><rect x="295.4" y="546" width="9.2" height="7.6" fill="#d8d8d8" stroke="#777" stroke-width="0.8"/><rect x="296.8" y="547.7" width="6.2" height="2.8" fill="#8f8f8f"/><rect x="296.2" y="552" width="7.4" height="1.4" fill="#2f86c0"/><path d="M295.2 544 L298.4 541.1 M297 540.9 L298.8 540.9 L298.7 542.6" fill="none" stroke="#222" stroke-width="0.9"/><path d="M305.8 551 L309 548.5 M307.3 551.2 L305.6 551.1 L305.8 549.4" fill="none" stroke="#222" stroke-width="0.9"/><g transform="translate(327.5 546)"><path d="M7.17 -1.39 L7.17 1.39 L5.11 0.95 L4.29 2.95 L6.05 4.08 L4.08 6.05 L2.95 4.29 L0.95 5.11 L1.39 7.17 L-1.39 7.17 L-0.95 5.11 L-2.95 4.29 L-4.08 6.05 L-6.05 4.08 L-4.29 2.95 L-5.11 0.95 L-7.17 1.39 L-7.17 -1.39 L-5.11 -0.95 L-4.29 -2.95 L-6.05 -4.08 L-4.08 -6.05 L-2.95 -4.29 L-0.95 -5.11 L-1.39 -7.17 L1.39 -7.17 L0.95 -5.11 L2.95 -4.29 L4.08 -6.05 L6.05 -4.08 L4.29 -2.95 L5.11 -0.95 Z" fill="#f7f7f7" stroke="#555" stroke-width="0.85" stroke-linejoin="round"/><circle r="2.3" fill="#f0f0f0" stroke="#555" stroke-width="0.85"/></g><path d="M333.0 553.8 L335.3 553.8 L335.3 551.5 Z" fill="#333"/><path d="M348.5 543.5 C351 540.2 358.6 540.5 358.6 546.8 C358.6 550.5 355.5 552.6 352.8 552.8" fill="none" stroke="#9ccbe6" stroke-width="3"/><path d="M345.5 539.8 L345.6 547.3 L352.2 545.6 Z" fill="#8ec3e3"/><path d="M376.5 543.5 C374 540.2 366.4 540.5 366.4 546.8 C366.4 550.5 369.5 552.6 372.2 552.8" fill="none" stroke="#9ccbe6" stroke-width="3"/><path d="M379.5 539.8 L379.4 547.3 L372.8 545.6 Z" fill="#8ec3e3"/><circle cx="399.3" cy="546" r="7.3" fill="url(#gs)" stroke="#555" stroke-width="0.9"/><path d="M396.9 544.2 C396.9 541.4 401.8 541.4 401.8 544.2 C401.8 546 399.3 546.3 399.3 548.4" fill="none" stroke="#1d6aa0" stroke-width="1.7"/><circle cx="399.3" cy="550.7" r="1" fill="#1d6aa0"/><path d="M404.9 553.8 L407.2 553.8 L407.2 551.5 Z" fill="#333"/><g stroke="#c9c9c9" stroke-width="0.5"><path d="M422 539.5 V552.5 M425.3 539.5 V552.5 M428.6 539.5 V552.5 M431.8 539.5 V552.5 M419.5 542.5 H432.2 M419.5 545.8 H432.2 M419.5 549 H432.2"/></g><path d="M419 541.5 V549 C419 551.2 420.4 552.5 422.5 552.5 H432.2" fill="none" stroke="#2a78ad" stroke-width="1.1"/><path d="M421.8 539.4 H428.5" stroke="#2a78ad" stroke-width="0.6"/><circle cx="420.2" cy="541.2" r="1.9" fill="#2a78ad"/><path d="M442.5 543.5 C443 540.5 446.5 539 450 539 C454 539 456.8 540.6 456.8 543.4 L456.8 549.4 C456.8 552 453.5 553.6 449.5 553.6 C445.3 553.6 442.3 552 442.2 549.2 Z" fill="url(#gg)" stroke="#444" stroke-width="0.85"/><path d="M442.5 543.6 C445 545.5 449 546 450.5 545.4 C452.5 544.8 455 543.8 456.8 543.4 M450.5 545.4 V553.5 M442.3 547 C445 548.8 448.5 549.3 450.5 549 C453 548.5 455 547.6 456.8 547 M446.5 539.6 C446 545 446.2 549 446.4 553 M454 539.8 C454.4 545 454 549 454 552.6" fill="none" stroke="#8c8c8c" stroke-width="0.5"/><path d="M454.9 553.8 L457.2 553.8 L457.2 551.5 Z" fill="#333"/><g transform="rotate(-20 471 546.4)"><ellipse cx="471" cy="546.4" rx="6.4" ry="7.7" fill="#e6e6e6" stroke="#444" stroke-width="0.9"/><ellipse cx="471" cy="546.4" rx="2.1" ry="3.2" fill="#c4e0f3" stroke="#666" stroke-width="0.6"/><path d="M471 538.7 V543.2 M471 549.6 V554.1 M464.6 546.4 H468.9 M473.1 546.4 H477.4 M466.5 541 L469.5 543.8 M475.5 541 L472.5 543.8 M466.5 551.8 L469.5 549 M475.5 551.8 L472.5 549" stroke="#7a7a7a" stroke-width="0.55"/></g><path d="M476.7 554.6 L479 554.6 L479 552.3000000000001 Z" fill="#333"/><path d="M492 538.8 L499.7 546 L492 553.4 L484.3 546 Z" fill="#e4e4e4"/><path d="M488.2 542.4 L495.8 549.7 M495.8 542.4 L488.2 549.7 M492 538.8 L499.7 546 L492 553.4 L484.3 546 Z" fill="none" stroke="#3d8cc4" stroke-width="0.9"/><g fill="#3d8cc4"><circle cx="492" cy="538.8" r="0.9"/><circle cx="499.7" cy="546" r="0.9"/><circle cx="492" cy="553.4" r="0.9"/><circle cx="484.3" cy="546" r="0.9"/><circle cx="488.2" cy="542.4" r="0.9"/><circle cx="495.8" cy="542.4" r="0.9"/><circle cx="488.2" cy="549.7" r="0.9"/><circle cx="495.8" cy="549.7" r="0.9"/><circle cx="492" cy="546" r="0.9"/></g><path d="M510.5 548.5 L517.8 544.8 L525.6 550.6 L517.8 554.3 Z" fill="#cfcfcf" stroke="#666" stroke-width="0.7" stroke-linejoin="round"/><path d="M512.5 549 C515 548 516.5 545.5 517.8 544.6 C519 545.5 521 548.5 523.5 550 L517.8 552.6 Z" fill="url(#gb)"/><path d="M517.8 544 V540.5" stroke="#222" stroke-width="1.1"/><path d="M516.3 541.3 L517.8 538.9 L519.3 541.3 Z" fill="#222"/><path d="M533 538.6 C537 539.2 540 539 544 538.4 C545.5 542.5 545.5 549.5 543.8 553 C540 553.2 537 553.4 533.8 553.6 C536.2 549 536.2 542.5 533 538.6 Z" fill="#f5f5f5" stroke="#555" stroke-width="0.8"/><path d="M537.2 539.2 C539 543 539 549 537.5 553.2 M540.5 539 C542.3 543 542.3 549 540.8 553.2" fill="none" stroke="#3a8ec7" stroke-width="1.1"/><path d="M554.6 541.5 L566.4 538.6 L566.5 550.2 L554.8 553.6 Z" fill="#e8e8e8" stroke="#666" stroke-width="0.8"/><path d="M556.5 542.8 L564.6 540.7 L564.6 549.1 L556.7 551.6 Z M558.3 544 L562.9 542.9 L562.9 548 L558.4 549.3 Z" fill="none" stroke="#3a8ec7" stroke-width="1"/><rect x="559.6" y="544.6" width="2" height="3" fill="none" stroke="#3a8ec7" stroke-width="0.6"/><path d="M575 540.8 L582.7 538.6 L588 544.4 L579.4 546.1 Z" fill="#fbfbfb" stroke="#555" stroke-width="0.8" stroke-linejoin="round"/><path d="M579.4 546.1 L588 544.4 L585.2 550.1 L576 553.6 Z" fill="#d8d8d8" stroke="#555" stroke-width="0.8" stroke-linejoin="round"/><path d="M579.4 546.1 L588 544.4" stroke="#3a8ec7" stroke-width="1.2"/><path d="M596.9 540.3 L601.8 546.1 L599.4 552.2" fill="none" stroke="#333" stroke-width="0.9"/><path d="M596.9 540.3 H608.5 M601.8 546.1 H608.5 M599.4 552.2 H608.5" stroke="#333" stroke-width="1"/><path d="M607.3 539.2 L609.8 540.3 L607.3 541.4 Z M607.3 545 L609.8 546.1 L607.3 547.2 Z M607.3 551.1 L609.8 552.2 L607.3 553.3 Z" fill="#222"/><path d="M610.6 538.6 V553.8" stroke="#333" stroke-width="0.7" stroke-dasharray="1 0.8"/><g fill="#fff" stroke="#333" stroke-width="0.7"><circle cx="596.9" cy="540.3" r="1.3"/><circle cx="601.8" cy="546.1" r="1.1"/><circle cx="599.4" cy="552.2" r="1.3"/></g><path d="M617.4 540.8 C622 540.2 627 539.6 631.5 538.4 C632.8 542.5 632.8 548.5 631.3 551.8 C627 552.5 622 553.3 619 553.8 C620.5 549.5 620 545 617.4 540.8 Z" fill="#f3f3f3" stroke="#555" stroke-width="0.8"/><path d="M621.1 541.6 L630.6 540.8 C631.2 543.5 631.2 547 630.6 549.6 L622.4 551.8 C622.8 548 622.5 545 621.1 541.6 Z" fill="url(#gb)"/><path d="M641.2 538 L651.5 544.2 L651.5 553.8 L641.2 548 Z" fill="#7fbde3" stroke="#3a8ec7" stroke-width="0.6"/><path d="M648 542.5 C652 541.8 653.4 544 653.4 546.5 C653.4 549 652 550 649.5 550" fill="#e0e0e0" stroke="#888" stroke-width="0.6"/><rect x="639" y="543.2" width="8.5" height="8.2" rx="2.6" fill="url(#gg)" stroke="#777" stroke-width="0.6"/><path d="M661 541.5 L667.5 538.4 L674.7 540.3 L674.7 549.8 L668.2 553.6 L661 551.2 Z" fill="#f6f6f6" stroke="#555" stroke-width="0.8" stroke-linejoin="round"/><path d="M665.8 543.3 L674.7 541 L674.7 549.8 L668.2 553.6 L665.8 552 Z" fill="url(#gb)"/><path d="M661 541.5 L665.8 543.3 L674.7 540.3 M665.8 543.3 V553" fill="none" stroke="#666" stroke-width="0.6"/><path d="M670.6 549.2 L674.6 553.2 M674.6 549.2 L670.6 553.2" stroke="#e0281e" stroke-width="1.6"/><rect x="689.5" y="538.4" width="4.2" height="15.1" rx="0.6" fill="#e6e6e6" stroke="#888" stroke-width="0.6"/><path d="M682.4 540.5 C687 542 690 546 690.2 553.3 L693.6 553.3 C693.4 545 689.5 540 684.5 538.8 Z" fill="#fafafa" stroke="#666" stroke-width="0.7"/><path d="M682.6 540 C687.5 541.5 691.5 546.5 691.8 553" fill="none" stroke="#3a8ec7" stroke-width="0.9"/><circle cx="710.4" cy="546.1" r="7.3" fill="url(#gs)" stroke="#444" stroke-width="0.9"/><path d="M703.2 546.6 C706 548.5 714.5 548.5 717.6 546.3 M710.6 538.8 C708.2 541.5 708.2 550.5 710.8 553.4" fill="none" stroke="#9a9a9a" stroke-width="0.5"/><path d="M705.8 550.4 L714.8 541.4" stroke="#2a7fb8" stroke-width="1.2"/><path d="M704.8 551.4 L705.4 547.8 L708.4 550.8 Z M715.8 540.4 L715.2 544 L712.2 541 Z" fill="#2a7fb8"/><path d="M730 538.6 L739 538.3 L733.8 553.8 L724.2 553.8 C723.8 548 726.5 542 730 538.6 Z" fill="#f2f2f2" stroke="#555" stroke-width="0.8" stroke-linejoin="round"/><path d="M731 539.2 L738.5 538.8 L733 553.5" fill="none" stroke="#2f86c0" stroke-width="1.1"/><path d="M730 538.6 C729.5 545 730 549 730.2 553.5 M735 541 L727 553" fill="none" stroke="#777" stroke-width="0.5"/><path d="M730.6 538.8 L730.4 553.6" stroke="#333" stroke-width="0.9"/><circle cx="738.6" cy="538.8" r="1.1" fill="#222"/><path d="M750 538.5 L760.5 546.4 L753.5 553 Z" fill="#dcdcdc" stroke="#777" stroke-width="0.6"/><path d="M751.5 542.3 C748 544 745.5 549 745.6 553 C749 553.2 752.5 551.5 754.5 548.5 Z" fill="#2a80b8"/><path d="M748 547 L752.5 550.3 M750 544.5 L749 552" stroke="#8cc6ea" stroke-width="0.5"/><path d="M772.2 541.5 C772.2 539 784.7 539 784.7 541.5 V550.5 C784.7 553.8 772.2 553.8 772.2 550.5 Z" fill="url(#gg)" stroke="#555" stroke-width="0.85"/><path d="M772.2 544.5 C772.2 546.5 784.7 546.5 784.7 544.5" fill="none" stroke="#555" stroke-width="0.7"/><path d="M776 539.5 V545.7 M780.6 539.5 V545.7 M772.2 542.5 C775 543.5 782 543.5 784.7 542.5" fill="none" stroke="#777" stroke-width="0.6"/><path d="M792.2 540 C795 538.8 804.5 538.8 807.4 540 C807 542.5 804.5 543.5 803.5 545.5 C805.5 547 805.8 550 804 551.6 C801.5 553 797.5 553 795 551.6 C793.3 550 793.6 547 795.5 545.5 C794.5 543.5 792.4 542.5 792.2 540 Z" fill="url(#gg)" stroke="#555" stroke-width="0.85"/><path d="M799.4 538.2 V554" stroke="#2f86c0" stroke-width="1.1" stroke-dasharray="1.8 1"/><path d="M813.5 547.8 L819.8 553.6 L829.3 549.4 L823 544.5 Z" fill="#d9d9d9" stroke="#666" stroke-width="0.6"/><path d="M815.5 542.5 L821.8 539.6 L826.5 542.2 L826.6 548 L820.2 551 L815.7 548 Z" fill="url(#gg)" stroke="#555" stroke-width="0.7"/><path d="M815.5 542.5 L820.2 545.3 L826.5 542.2 M820.2 545.3 V551" fill="none" stroke="#777" stroke-width="0.55"/><g fill="#2f7fb8"><circle cx="821.8" cy="539.6" r="1.05"/><circle cx="817.8" cy="541" r="1.05"/><circle cx="825.2" cy="541" r="1.05"/><circle cx="815.5" cy="542.5" r="1.05"/><circle cx="826.5" cy="542.2" r="1.05"/><circle cx="820.2" cy="545.3" r="1.05"/><circle cx="815.7" cy="548" r="1.05"/><circle cx="826.6" cy="548" r="1.05"/><circle cx="820.2" cy="551" r="1.05"/></g></svg>
</body></html>
